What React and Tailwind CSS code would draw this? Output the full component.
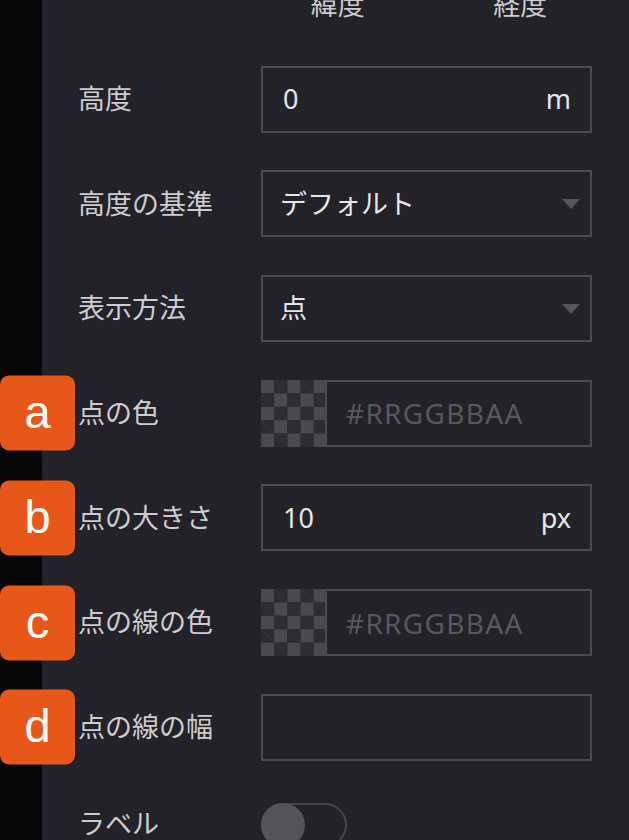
import { useState } from "react";

const font = "font-['Noto_Sans','Noto_Sans_CJK_JP',sans-serif]";

function Checker() {
  const cells = [];
  for (let r = 0; r < 5; r++) {
    for (let c = 0; c < 5; c++) {
      const light = (r + c) % 2 === 0;
      cells.push(
        <g key={`${r}-${c}`}>
          <rect
            x={c * 13.2}
            y={r * 13.4}
            width="13.2"
            height="13.4"
            fill={light ? "#4a4a4c" : "#2d2c32"}
          />
          {!light && (
            <line
              x1={c * 13.2}
              y1={r * 13.4}
              x2={c * 13.2 + 13.2}
              y2={r * 13.4 + 13.4}
              stroke="#38373d"
              strokeWidth="1"
            />
          )}
        </g>
      );
    }
  }
  return (
    <svg width="64" height="67" viewBox="0 0 64 67" className="shrink-0">
      {cells}
    </svg>
  );
}

function Badge({ letter }) {
  return (
    <div className="absolute left-[-78px] top-1/2 -translate-y-1/2 flex h-[75px] w-[75px] items-center justify-center rounded-[9px] bg-[#e8571a] pb-[4px] font-['Liberation_Sans',sans-serif] text-[47px] leading-none text-white">
      {letter}
    </div>
  );
}

function Row({ label, badge, children, className = "h-[67px]" }) {
  return (
    <div className={`relative flex shrink-0 items-center ${className}`}>
      {badge && <Badge letter={badge} />}
      <div className="w-[183px] shrink-0 text-[27px] text-[#cdcdd0]">{label}</div>
      {children}
    </div>
  );
}

function TextBox({ value, unit }) {
  return (
    <div className="flex h-full w-[331px] items-center justify-between border-2 border-[#4b4b4e] pl-[20px] pr-[19px] text-[27px] text-[#e6e6e8]">
      <span>{value}</span>
      {unit && <span>{unit}</span>}
    </div>
  );
}

function SelectBox({ value }) {
  return (
    <div className="flex h-full w-[331px] items-center justify-between border-2 border-[#4b4b4e] pl-[17px] pr-[10px] text-[27px] text-[#e6e6e8]">
      <span>{value}</span>
      <svg width="18" height="10" viewBox="0 0 18 10">
        <path d="M0 0 L18 0 L9 10 Z" fill="#57575b" />
      </svg>
    </div>
  );
}

function ColorBox() {
  return (
    <div className="flex h-full w-[331px]">
      <Checker />
      <div className="flex flex-1 items-center border-2 border-[#4b4b4e] pl-[19px] text-[28px] tracking-[1.3px] text-[#58585c]">
        #RRGGBBAA
      </div>
    </div>
  );
}

export default function App() {
  const [label, setLabel] = useState(false);

  return (
    <div className={`flex h-[840px] w-full overflow-hidden ${font}`}>
      <div className="w-[42px] shrink-0 bg-[#070707]" />
      <div className="flex flex-1 flex-col gap-[37.7px] bg-[#232228] pl-[36px]">
        <div className="mb-[10px] mt-[-8px] flex shrink-0">
          <div className="w-[183px] shrink-0" />
          <div className="grid w-[331px] grid-cols-2 text-center text-[27px] leading-[26px] text-[#cdcdd0]">
            <span className="pr-[12px]">緯度</span>
            <span className="pl-[22px]">経度</span>
          </div>
        </div>

        <Row label="高度">
          <TextBox value="0" unit="m" />
        </Row>
        <Row label="高度の基準">
          <SelectBox value="デフォルト" />
        </Row>
        <Row label="表示方法">
          <SelectBox value="点" />
        </Row>
        <Row label="点の色" badge="a">
          <ColorBox />
        </Row>
        <Row label="点の大きさ" badge="b">
          <TextBox value="10" unit="px" />
        </Row>
        <Row label="点の線の色" badge="c">
          <ColorBox />
        </Row>
        <Row label="点の線の幅" badge="d">
          <TextBox value="" />
        </Row>
        <Row label="ラベル" className="h-[52px]">
          <button
            onClick={() => setLabel(!label)}
            className="relative h-[44px] w-[86px] rounded-full border-2 border-[#46464a]"
          >
            <span className="absolute left-[-2px] top-[-2px] h-[44px] w-[44px] rounded-full bg-[#545458]" />
          </button>
        </Row>
      </div>
    </div>
  );
}
